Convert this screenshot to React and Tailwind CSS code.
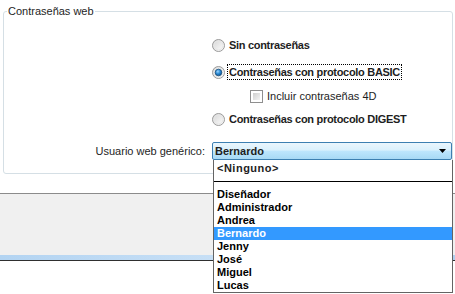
import React from "react"

const font = { fontFamily: '"Liberation Sans", Arial, sans-serif' }

const Radio = ({ checked }) => (
  <svg width="13" height="13" viewBox="0 0 13 13" className="shrink-0">
    <defs>
      <linearGradient id="rg" x1="0" y1="0" x2="1" y2="1">
        <stop offset="0" stopColor="#d4d4d4" />
        <stop offset="1" stopColor="#ffffff" />
      </linearGradient>
      <radialGradient id="dot" cx="0.4" cy="0.35" r="0.7">
        <stop offset="0" stopColor="#9bd5ff" />
        <stop offset="0.5" stopColor="#2a8ad4" />
        <stop offset="1" stopColor="#0d4f8a" />
      </radialGradient>
    </defs>
    <circle cx="6.5" cy="6.5" r="6" fill="url(#rg)" stroke="#9a9a9a" />
    <circle cx="6.5" cy="6.5" r="4.5" fill="none" stroke="#e6e6e6" />
    {checked && <circle cx="6.5" cy="6.5" r="3.3" fill="url(#dot)" stroke="#1b4f7c" strokeWidth="0.8" />}
  </svg>
)

const Checkbox = () => (
  <div className="w-[13px] h-[13px] border border-[#8f8f8f] bg-white p-[2px] shrink-0">
    <div className="w-full h-full bg-gradient-to-br from-[#cfcfcf] to-[#f4f4f4]" />
  </div>
)

const users = ["Diseñador", "Administrador", "Andrea", "Bernardo", "Jenny", "José", "Miguel", "Lucas"]

export default function App() {
  return (
    <div className="relative w-[455px] h-[294px] bg-white overflow-hidden text-[11px] text-[#1e1e1e]" style={font}>
      <div className="pl-[3px] pr-[2px] pt-[4px]">
        <fieldset className="border border-[#d5dfe5] rounded-[3px] h-[170px]">
          <legend className="ml-[3px] px-[1px] leading-[14px] text-[#1e1e1e]">Contraseñas web</legend>
          <div className="flex flex-col pl-[208px] pt-[19px]">
            <div className="flex items-center h-[16px]">
              <Radio />
              <span className="ml-[4px] font-bold tracking-[-0.3px]">Sin contraseñas</span>
            </div>
            <div className="flex items-center h-[16px] mt-[11px]">
              <Radio checked />
              <span className="ml-[2px] px-[1px] h-[16px] flex items-center border border-dotted border-black font-bold tracking-[-0.3px]">
                Contraseñas con protocolo BASIC
              </span>
            </div>
            <div className="flex items-center h-[16px] mt-[8px] pl-[38px]">
              <Checkbox />
              <span className="ml-[4px]">Incluir contraseñas 4D</span>
            </div>
            <div className="flex items-center h-[16px] mt-[7px]">
              <Radio />
              <span className="ml-[4px] font-bold tracking-[-0.3px]">Contraseñas con protocolo DIGEST</span>
            </div>
          </div>
          <div className="flex items-center justify-end gap-[7px] mt-[15px]">
            <span>Usuario web genérico:</span>
            <div className="w-[240px] h-[18px] border border-[#3c7fb1] rounded-[2px] bg-[linear-gradient(#eaf6fd_0%,#d9f0fc_45%,#bee6fd_50%,#a7d9f5_100%)] flex items-center justify-between pl-[2px] pr-[5px]">
              <span className="font-bold">Bernardo</span>
              <svg width="7" height="4" viewBox="0 0 7 4">
                <path d="M0 0H7L3.5 4Z" fill="#000" />
              </svg>
            </div>
          </div>
        </fieldset>
      </div>

      <div className="mt-[19px] border-t border-[#8b8b8b] bg-[#f0f0f0] h-[62px]" />
      <div className="h-[6px] bg-gradient-to-r from-[#b3d4f2] via-[#c8e0f6] to-[#aecff0] border-b border-[#2f2f2f]" />

      <div className="absolute left-[213px] top-[160px] w-[240px] h-[133px] bg-white border border-t-0 border-[#646464] font-bold leading-[13px]">
        <div className="h-[14px] pl-[3px] pt-[2px] tracking-[0.5px]">&lt;Ninguno&gt;</div>
        <div className="h-[14px] flex items-center">
          <div className="w-full border-t border-black" />
        </div>
        {users.map((u) => (
          <div
            key={u}
            className={`h-[13px] pl-[3px] ${u === "Bernardo" ? "bg-[#3399ff] text-white" : "text-black"}`}
          >
            {u}
          </div>
        ))}
      </div>
    </div>
  )
}
